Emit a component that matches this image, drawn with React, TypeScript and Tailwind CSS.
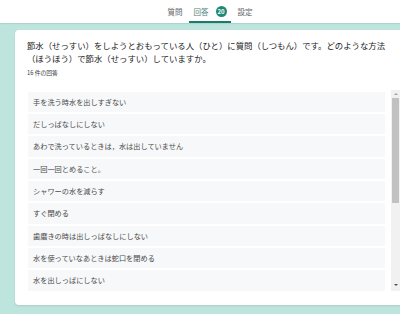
import React from "react";

const items = [
  "手を洗う時水を出しすぎない",
  "だしっぱなしにしない",
  "あわで洗っているときは，水は出していません",
  "一回一回とめること。",
  "シャワーの水を減らす",
  "すぐ閉める",
  "歯磨きの時は出しっぱなしにしない",
  "水を使っていなあときは蛇口を閉める",
  "水を出しっぱにしない",
];

export default function App() {
  return (
    <div
      className="w-[400px] h-[314px] bg-[#bde5dd] flex flex-col overflow-hidden"
      style={{ fontFamily: '"Noto Sans CJK JP", "Noto Sans", sans-serif' }}
    >
      <div className="h-[23px] bg-white flex justify-center items-end shrink-0 shadow-[0_1px_1px_rgba(0,0,0,0.08)]">
        <div className="flex items-end ml-[20px]">
          <div className="h-[23px] flex items-center text-[7.5px] text-[#5f6368]">質問</div>
          <div className="ml-[6px] h-[23px] flex items-center pl-[5px] pr-[4px] border-b-[2px] border-[#1b7a69] pt-[2px]">
            <span className="text-[7.5px] text-[#4f7f77]">回答</span>
            <span className="ml-[7px] w-[11px] h-[11px] rounded-full bg-[#1e8a76] text-white text-[6px] font-bold flex items-center justify-center">20</span>
          </div>
          <div className="ml-[7px] h-[23px] flex items-center text-[7.5px] text-[#5f6368]">設定</div>
        </div>
      </div>
      <div className="flex-1 pl-[15px] pt-[7px]">
        <div className="bg-white h-[275px] rounded-l-[4px] pl-[12px] pt-[8.5px] shadow-[0_1px_2px_rgba(0,0,0,0.1)]">
          <div className="text-[8.4px] leading-[13px] text-[#202124] w-[362px]">
            節水（せっすい）をしようとおもっている人（ひと）に質問（しつもん）です。どのような方法（ほうほう）で節水（せっすい）していますか。
          </div>
          <div className="text-[5.8px] leading-[8px] text-[#3c4043] mt-[4.5px]">16 件の回答</div>
          <div className="flex mt-[13px] ml-[1px] h-[201px]">
            <div className="w-[357px] flex flex-col gap-[2px] pt-[1.8px]">
              {items.map((t) => (
                <div
                  key={t}
                  className="h-[20.33px] shrink-0 bg-[#f7f8f9] flex items-center pl-[5px] text-[7.2px] text-[#4a4a4a]"
                >
                  {t}
                </div>
              ))}
            </div>
            <div className="ml-[6px] w-[9px] bg-[#f1f1f1] flex flex-col items-center">
              <div className="h-[8px] flex items-center justify-center">
                <div className="w-0 h-0 border-l-[2px] border-r-[2px] border-b-[2px] border-l-transparent border-r-transparent border-b-[#a3a3a3]" />
              </div>
              <div className="w-[7px] h-[105px] bg-[#c1c1c1]" />
              <div className="flex-1" />
              <div className="h-[8px] flex items-center justify-center mb-[2px]">
                <div className="w-0 h-0 border-l-[2px] border-r-[2px] border-t-[2px] border-l-transparent border-r-transparent border-t-[#505050]" />
              </div>
            </div>
          </div>
        </div>
      </div>
    </div>
  );
}
